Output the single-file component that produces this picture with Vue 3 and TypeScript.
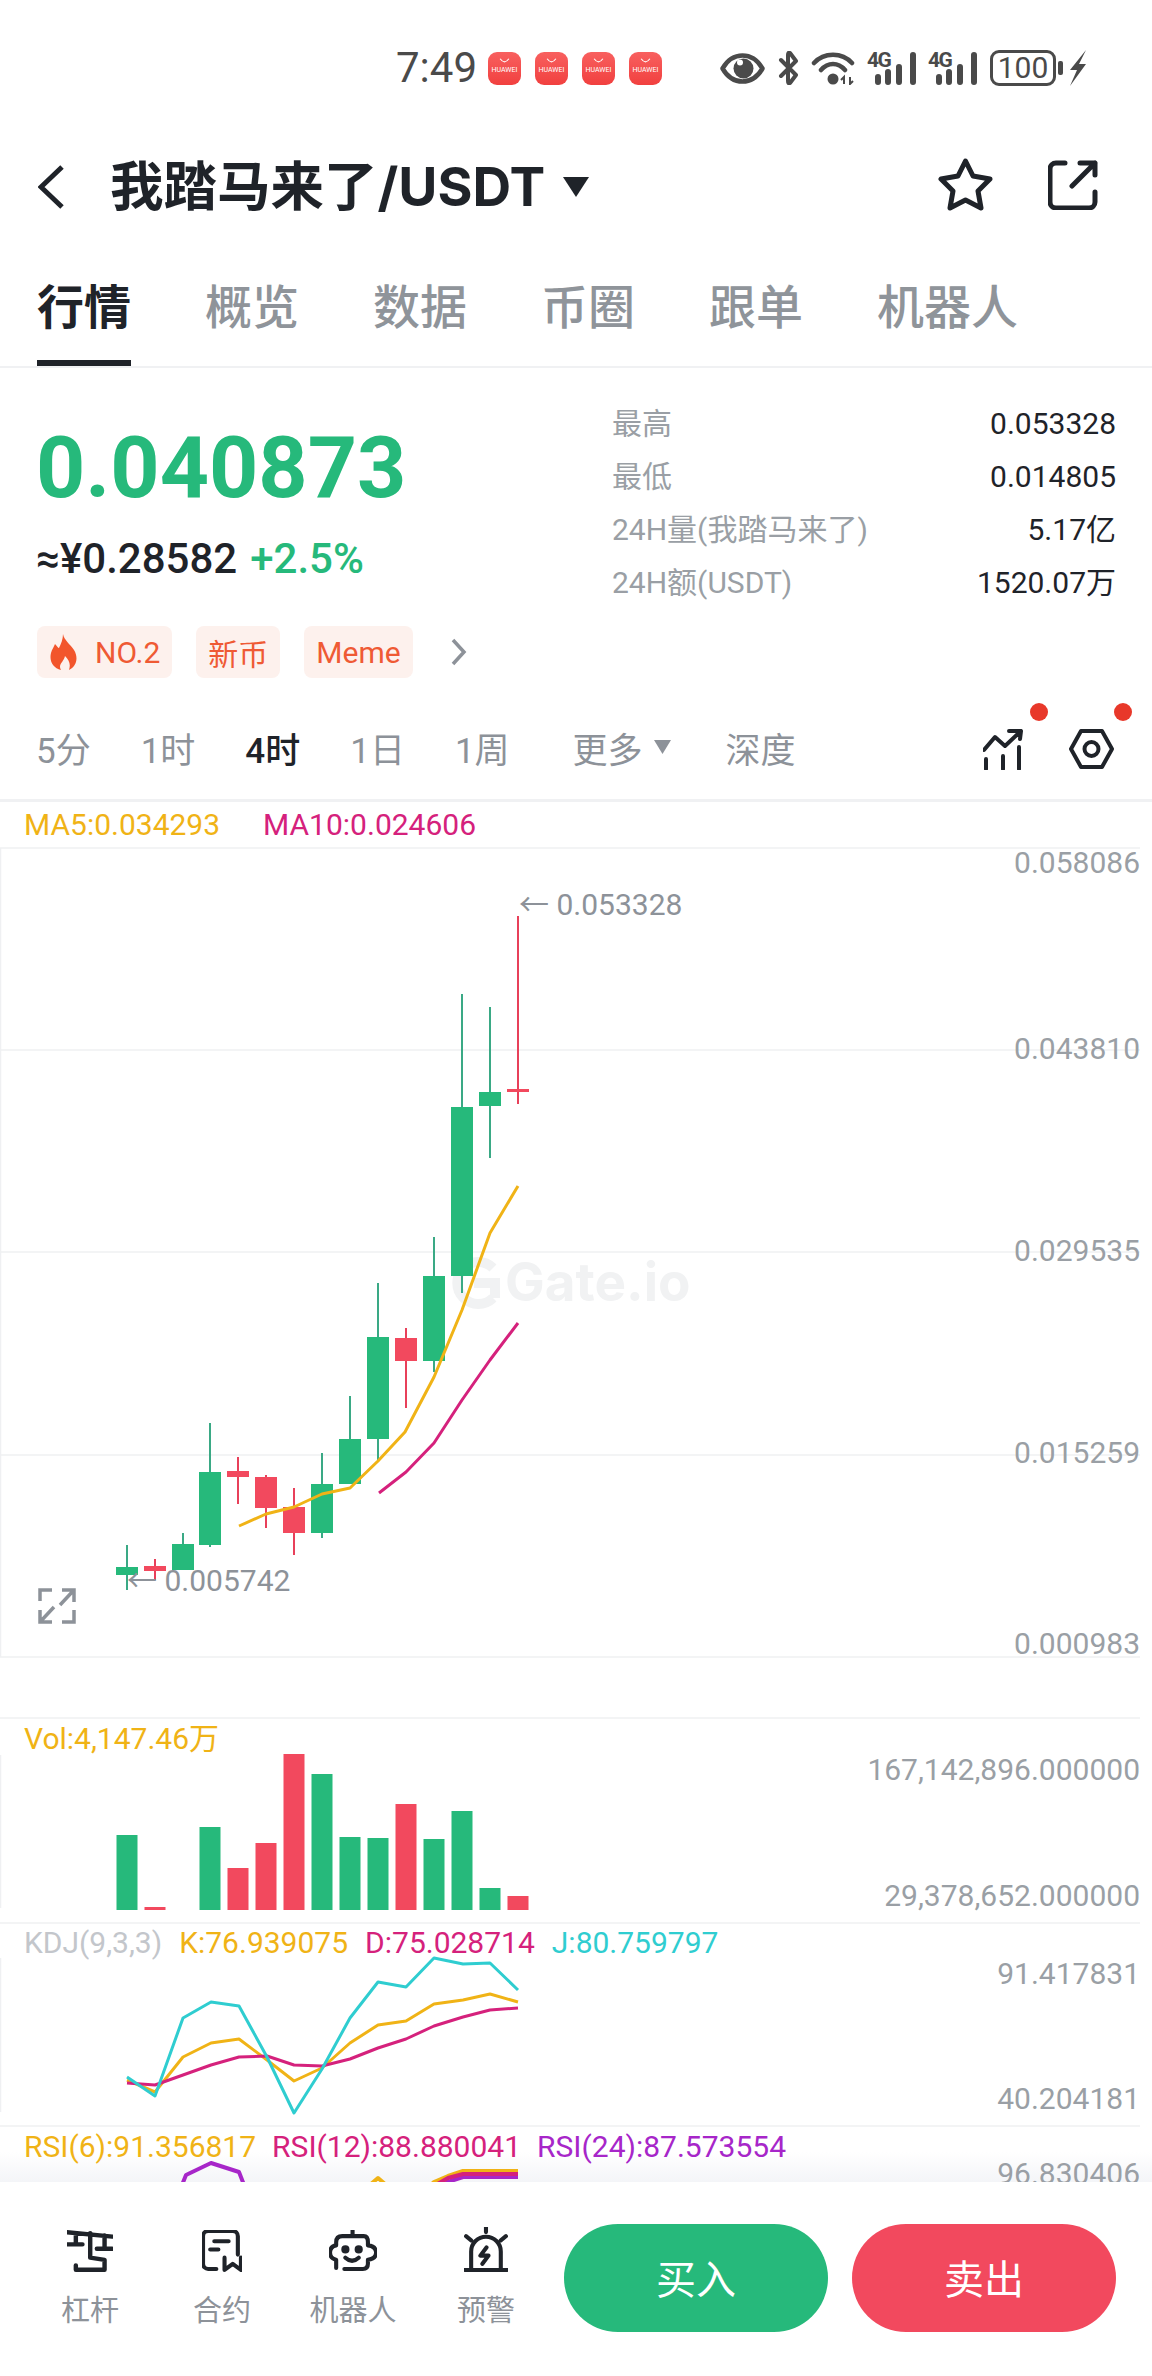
<script setup lang="ts">
interface Candle {
  x: number
  high: number
  low: number
  top: number
  bottom: number
  up: boolean
}

const tabs = ['行情', '概览', '数据', '币圈', '跟单', '机器人']
const intervals = ['5分', '1时', '4时', '1日', '1周']
const stats = [
  { label: '最高', value: '0.053328' },
  { label: '最低', value: '0.014805' },
  { label: '24H量(我踏马来了)', value: '5.17亿' },
  { label: '24H额(USDT)', value: '1520.07万' }
]

const candles: Candle[] = [
  { x: 127, high: 1545, low: 1590, top: 1567, bottom: 1575, up: true },
  { x: 155, high: 1559, low: 1580, top: 1566, bottom: 1571, up: false },
  { x: 183, high: 1533, low: 1570, top: 1544, bottom: 1570, up: true },
  { x: 210, high: 1423, low: 1547, top: 1472, bottom: 1545, up: true },
  { x: 238, high: 1457, low: 1504, top: 1471, bottom: 1477, up: false },
  { x: 266, high: 1475, low: 1528, top: 1477, bottom: 1508, up: false },
  { x: 294, high: 1488, low: 1555, top: 1507, bottom: 1533, up: false },
  { x: 322, high: 1453, low: 1538, top: 1484, bottom: 1533, up: true },
  { x: 350, high: 1396, low: 1484, top: 1439, bottom: 1484, up: true },
  { x: 378, high: 1283, low: 1461, top: 1337, bottom: 1439, up: true },
  { x: 406, high: 1328, low: 1408, top: 1338, bottom: 1361, up: false },
  { x: 434, high: 1237, low: 1372, top: 1276, bottom: 1361, up: true },
  { x: 462, high: 994, low: 1293, top: 1107, bottom: 1276, up: true },
  { x: 490, high: 1007, low: 1158, top: 1092, bottom: 1106, up: true },
  { x: 518, high: 916, low: 1104, top: 1089, bottom: 1092, up: false }
]

const ma5 = '239,1526 266,1514 294,1507 322,1494 350,1488 378,1461 405,1432 434,1377 462,1310 490,1233 518,1186'
const ma10 = '379,1493 406,1472 434,1443 462,1400 490,1360 518,1323'

const mainGrid = [848, 1050, 1252, 1455, 1657]
const mainAxis = [
  { y: 862, text: '0.058086' },
  { y: 1048, text: '0.043810' },
  { y: 1250, text: '0.029535' },
  { y: 1452, text: '0.015259' },
  { y: 1643, text: '0.000983' }
]

const volumes = [
  { x: 127, top: 1835, up: true },
  { x: 155, top: 1907, up: false },
  { x: 210, top: 1827, up: true },
  { x: 238, top: 1868, up: false },
  { x: 266, top: 1843, up: false },
  { x: 294, top: 1754, up: false },
  { x: 322, top: 1774, up: true },
  { x: 350, top: 1837, up: true },
  { x: 378, top: 1838, up: true },
  { x: 406, top: 1804, up: false },
  { x: 434, top: 1839, up: true },
  { x: 462, top: 1811, up: true },
  { x: 490, top: 1888, up: true },
  { x: 518, top: 1896, up: false }
]

const kLine = '127,2080 155,2092 183,2057 211,2043 239,2039 267,2060 294,2081 322,2068 350,2043 378,2025 406,2021 434,2004 463,2000 490,1994 518,2002'
const dLine = '127,2083 155,2085 183,2075 211,2065 239,2057 267,2056 294,2065 322,2066 350,2059 378,2048 406,2039 434,2026 463,2017 490,2010 518,2008'
const jLine = '127,2077 155,2096 183,2018 211,2002 239,2006 267,2057 294,2113 322,2069 350,2018 378,1982 406,1987 434,1958 463,1964 490,1963 518,1990'

const rsiYellow = '364,2190 378,2178 392,2190 420,2195 434,2182 448,2176 463,2171 518,2171'
const rsiPink = '420,2198 434,2186 448,2178 463,2174 518,2174'
const rsiPurple = '180,2190 186,2175 211,2163 239,2172 246,2190'
const rsiPurple2 = '420,2202 434,2190 448,2182 463,2177 518,2177'

const tools = [
  { key: 'leverage', label: '杠杆' },
  { key: 'contract', label: '合约' },
  { key: 'robot', label: '机器人' },
  { key: 'alert', label: '预警' }
]
</script>

<template>
  <div class="page">
    <div class="status">
      <span class="clock">7:49</span>
      <div class="apps">
        <span v-for="n in 4" :key="n" class="app">
          <svg class="app-arc" viewBox="0 0 10 5"><path d="M1 0.5 Q5 6 9 0.5" /></svg>
          <span class="app-name">HUAWEI</span>
        </span>
      </div>
      <svg class="st-eye" viewBox="0 0 45 31">
        <path d="M2.5 15.5 C8 6 15 2.5 22.5 2.5 C30 2.5 37 6 42.5 15.5 C37 25 30 28.5 22.5 28.5 C15 28.5 8 25 2.5 15.5Z" fill="none" stroke="#4a4a4a" stroke-width="4.5" stroke-linejoin="round" />
        <circle cx="23.5" cy="15.5" r="10" fill="#4a4a4a" />
        <circle cx="20" cy="9.5" r="3" fill="#fff" />
      </svg>
      <svg class="st-bt" viewBox="0 0 22 34">
        <path d="M3 9 L18 24 L12 32 Q10 33 10 30 V4 Q10 1 12 2 L18 10 L3 25" fill="none" stroke="#4a4a4a" stroke-width="4" stroke-linejoin="round" stroke-linecap="round" />
      </svg>
      <svg class="st-wifi" viewBox="0 0 46 34">
        <path d="M3 12 C13 1 31 1 41 12 M10 19 C17 11 27 11 34 19" fill="none" stroke="#4a4a4a" stroke-width="4.5" stroke-linecap="round" />
        <circle cx="22" cy="28" r="5.5" fill="#4a4a4a" />
        <path d="M33 33 V26 L30 29 M39 26 V33 L42 30" fill="none" stroke="#4a4a4a" stroke-width="2" />
      </svg>
      <div v-for="n in 2" :key="'sig' + n" class="signal">
        <span class="signal-net">4G</span>
        <svg class="signal-bars" viewBox="0 0 51 34">
          <path d="M11 26 V31 M21 21 V31 M32 16 V31 M46 4 V31" stroke="#4a4a4a" stroke-width="6" stroke-linecap="round" />
        </svg>
      </div>
      <span class="battery">100</span>
      <span class="battery-nub"></span>
      <svg class="st-bolt" viewBox="0 0 18 36"><path d="M17 0 L1 20 H8 L1 36 L17 14 H10Z" fill="#4a4a4a" /></svg>
    </div>

    <header class="nav">
      <svg class="back" viewBox="0 0 27 44"><polyline points="24,2 3,22 24,42" /></svg>
      <h1 class="pair">我踏马来了/USDT</h1>
      <svg class="pair-caret" viewBox="0 0 26 20"><polygon points="0,0 26,0 13,20" /></svg>
      <div class="nav-actions">
        <svg class="star" viewBox="0 0 55 53"><polygon points="27.5,3 35,18 52,21 40,33 43,50 27.5,42 12,50 15,33 3,21 20,18" /></svg>
        <svg class="share" viewBox="0 0 50 50">
          <path d="M17 3 H8 a6 6 0 0 0 -6 6 V42 a6 6 0 0 0 6 6 H41 a6 6 0 0 0 6 -6 V32 M24 26 L47 3 M32 3 H47 V15" />
        </svg>
      </div>
    </header>

    <nav class="tabs">
      <span v-for="(tab, i) in tabs" :key="tab" class="tab" :class="{ active: i === 0 }">{{ tab }}</span>
    </nav>

    <section class="summary">
      <div class="quote">
        <div class="price">0.040873</div>
        <div class="sub">≈¥0.28582<span class="change">+2.5%</span></div>
      </div>
      <div class="stats">
        <div v-for="s in stats" :key="s.label" class="stat">
          <span class="stat-label">{{ s.label }}</span>
          <span class="stat-value">{{ s.value }}</span>
        </div>
      </div>
    </section>

    <div class="tags">
      <span class="tag">
        <svg class="flame" viewBox="0 0 29 36">
          <path d="M14 0 C15 6 21 10 25 16 C30 24 27 33 20 36 C22 30 20 26 16 22 C15 27 11 29 11 33 C11 34 11.5 35 12 36 C4 34 0 27 2 19 C3 15 5 13 6 10 C8 12 9 14 10 14 C12 10 14 5 14 0Z" />
        </svg>
        NO.2
      </span>
      <span class="tag">新币</span>
      <span class="tag">Meme</span>
      <svg class="tag-more" viewBox="0 0 17 28"><polyline points="3,2 14,14 3,26" /></svg>
    </div>

    <div class="toolbar">
      <span v-for="(item, i) in intervals" :key="item" class="interval" :class="{ current: i === 2 }">{{ item }}</span>
      <span class="interval more">更多<svg class="more-caret" viewBox="0 0 17 14"><polygon points="0,0 17,0 8.5,14" /></svg></span>
      <span class="interval depth">深度</span>
      <div class="toolbar-icons">
        <span class="tool-icon">
          <svg class="trend" viewBox="0 0 40 41">
            <path d="M1 21 L12 8 L22 17 L38 2 M26 2 H38 L37 10 M3 30 V40 M20 27 V40 M36 18 V40" />
          </svg>
          <i class="dot dot-trend"></i>
        </span>
        <span class="tool-icon">
          <svg class="hex" viewBox="0 0 45 40">
            <polygon points="2,20 12,2 33,2 43,20 33,38 12,38" />
            <circle cx="22.5" cy="20" r="7" />
          </svg>
          <i class="dot dot-hex"></i>
        </span>
      </div>
    </div>

    <div class="legend-row">
      <span class="c-yellow">MA5:0.034293</span>
      <span class="c-pink">MA10:0.024606</span>
    </div>

    <div class="pane pane-main">
      <svg class="plot" viewBox="0 848 1152 869">
        <line x1="0.5" y1="848" x2="0.5" y2="1657" class="grid" />
        <line v-for="y in mainGrid" :key="y" x1="0" :y1="y" x2="1140" :y2="y" class="grid" />
        <path d="M493 1268 A21 21 0 1 0 493 1298 M474 1283 H495 V1298" fill="none" stroke="#f1f2f3" stroke-width="10" />
        <text x="505" y="1301" class="watermark">Gate.io</text>
        <template v-for="c in candles" :key="c.x">
          <line :x1="c.x" :y1="c.high" :x2="c.x" :y2="c.low" :class="c.up ? 'wick-up' : 'wick-down'" />
          <rect :x="c.x - 11" :y="c.top" width="22" :height="c.bottom - c.top" :class="c.up ? 'fill-up' : 'fill-down'" />
        </template>
        <polyline :points="ma5" class="line" stroke="#f0b316" />
        <polyline :points="ma10" class="line" stroke="#d5217c" />
        <text x="519" y="915" class="mark">← 0.053328</text>
        <text x="127" y="1591" class="mark">← 0.005742</text>
        <text v-for="a in mainAxis" :key="a.text" x="1140" :y="a.y + 11" class="axis">{{ a.text }}</text>
        <path d="M2 13 V2 H14 M22 17 L36 2 M24 2 H36 V14 M2 34 L16 19 M2 22 V34 H14 M36 22 V34 H24" transform="translate(38 1588)" class="expand" />
      </svg>
    </div>

    <div class="pane pane-vol">
      <svg class="plot" viewBox="0 1717 1152 205">
        <line x1="0" y1="1718" x2="1140" y2="1718" class="grid" />
        <line x1="0.5" y1="1755" x2="0.5" y2="1908" class="grid" />
        <rect v-for="v in volumes" :key="v.x" :x="v.x - 10.5" :y="v.top" width="21" :height="1910 - v.top" :class="v.up ? 'fill-up' : 'fill-down'" />
        <text x="1140" y="1780" class="axis">167,142,896.000000</text>
        <text x="1140" y="1906" class="axis">29,378,652.000000</text>
      </svg>
      <div class="legend legend-vol"><span class="c-yellow">Vol:4,147.46万</span></div>
    </div>

    <div class="pane pane-kdj">
      <svg class="plot" viewBox="0 1922 1152 203">
        <line x1="0" y1="1923" x2="1140" y2="1923" class="grid" />
        <line x1="0.5" y1="1958" x2="0.5" y2="2112" class="grid" />
        <polyline :points="kLine" class="line" stroke="#f0b316" />
        <polyline :points="dLine" class="line" stroke="#d5217c" />
        <polyline :points="jLine" class="line" stroke="#2fcdd0" />
        <text x="1140" y="1984" class="axis">91.417831</text>
        <text x="1140" y="2109" class="axis">40.204181</text>
      </svg>
      <div class="legend legend-kdj">
        <span class="c-grey">KDJ(9,3,3)</span>
        <span class="c-yellow">K:76.939075</span>
        <span class="c-pink">D:75.028714</span>
        <span class="c-cyan">J:80.759797</span>
      </div>
    </div>

    <div class="pane pane-rsi">
      <div class="pane-fade"></div>
      <svg class="plot" viewBox="0 2125 1152 57">
        <line x1="0" y1="2126" x2="1140" y2="2126" class="grid" />
        <polyline :points="rsiYellow" class="line line-thick" stroke="#f0b316" />
        <polyline :points="rsiPurple2" class="line line-thick" stroke="#a726c9" />
        <polyline :points="rsiPink" class="line line-thick" stroke="#d5217c" />
        <polyline :points="rsiPurple" class="line line-thick" stroke="#a726c9" />
        <text x="1140" y="2184" class="axis">96.830406</text>
      </svg>
      <div class="legend legend-rsi">
        <span class="c-yellow">RSI(6):91.356817</span>
        <span class="c-pink">RSI(12):88.880041</span>
        <span class="c-purple">RSI(24):87.573554</span>
      </div>
    </div>

    <footer class="bottom">
      <div v-for="t in tools" :key="t.key" class="bottom-tool" :class="'tool-' + t.key">
        <svg v-if="t.key === 'leverage'" class="leverage" viewBox="0 0 42 38">
          <path d="M0 2 L41 6 M8 3 V13 M1 13 H14 M34 5 V17 M27 17 H41 M21 3 V25 L34 27 V36 H8 V32" />
        </svg>
        <svg v-else-if="t.key === 'contract'" class="contract" viewBox="0 0 40 41">
          <path d="M14 38 H6 a5 5 0 0 1 -5 -5 V6 a5 5 0 0 1 5 -5 H30 a5 5 0 0 1 5 5 V24 M12 11 H26 M8 19 H16 M22 27 V39 L30 33 L38 39 V27" />
        </svg>
        <svg v-else-if="t.key === 'robot'" class="robot" viewBox="0 0 47 41">
          <path d="M23 0 V6 M13 6 H34 Q38 6 38 12 V15 Q46 16 46 22 Q46 28 38 29 V33 Q38 38 33 38 H15 M13 6 Q7 6 7 12 V15 Q1 16 1 22 Q1 28 7 29 V37 M16 27 Q22.5 33 29 27" />
          <circle cx="16" cy="19" r="2" />
          <circle cx="29" cy="19" r="2" />
        </svg>
        <svg v-else class="alert" viewBox="0 0 43 45">
          <path d="M21.5 0 V5 M2 9 L7 13 M41 9 L36 13 M7 42 V24 a14.5 14.5 0 0 1 29 0 V42 M1 42 H42 M22 20 L16 28 H24 L18 36" />
        </svg>
        <span class="bottom-label">{{ t.label }}</span>
      </div>
      <button class="trade buy">买入</button>
      <button class="trade sell">卖出</button>
    </footer>
  </div>
</template>

<style scoped>
.page {
  position: relative;
  width: 1152px;
  height: 2376px;
  overflow: hidden;
  background: #fff;
  color: #1f2329;
  font-family: Roboto, "Noto Sans CJK SC", sans-serif;
}

/* status bar */
.status {
  display: flex;
  align-items: center;
  height: 136px;
  padding-left: 396px;
  box-sizing: border-box;
  color: #4a4a4a;
}
.clock {
  width: 79px;
  font-size: 42px;
  line-height: 1;
}
.apps {
  display: flex;
  gap: 14px;
  margin-left: 13px;
}
.app {
  position: relative;
  display: block;
  width: 33px;
  height: 33px;
  border-radius: 9px;
  background: linear-gradient(#f8605f, #f1403f);
}
.app-arc {
  position: absolute;
  left: 11px;
  top: 6px;
  width: 11px;
  height: 6px;
  fill: none;
  stroke: #fff;
  stroke-width: 1;
}
.app-name {
  position: absolute;
  left: 0;
  right: 0;
  top: 14px;
  font-size: 7px;
  line-height: 9px;
  text-align: center;
  color: #fff;
}
.st-eye {
  width: 45px;
  height: 31px;
  margin-left: 58px;
}
.st-bt {
  width: 22px;
  height: 34px;
  margin-left: 13px;
}
.st-wifi {
  width: 46px;
  height: 34px;
  margin-left: 11px;
}
.signal {
  position: relative;
  width: 51px;
  height: 34px;
  margin-left: 10px;
}
.signal-net {
  position: absolute;
  left: 0;
  top: 1px;
  font-size: 21px;
  line-height: 17px;
  font-weight: 700;
  letter-spacing: -1.5px;
}
.signal-bars {
  position: absolute;
  inset: 0;
  width: 51px;
  height: 34px;
}
.battery {
  width: 66px;
  height: 36px;
  margin-left: 11px;
  box-sizing: border-box;
  border: 3px solid #4a4a4a;
  border-radius: 9px;
  font-size: 30px;
  line-height: 30px;
  text-align: center;
}
.battery-nub {
  width: 5px;
  height: 14px;
  margin-left: 2px;
  background: #4a4a4a;
  border-radius: 2px;
}
.st-bolt {
  width: 18px;
  height: 36px;
  margin-left: 6px;
}

/* title row */
.nav {
  display: flex;
  align-items: center;
  height: 102px;
  padding: 0 54px 0 38px;
}
.back {
  width: 27px;
  height: 44px;
  fill: none;
  stroke: #1f2329;
  stroke-width: 5;
}
.pair {
  margin: 0 0 0 45px;
  font-family: Inter, "Noto Sans CJK SC", sans-serif;
  font-size: 53.5px;
  line-height: 60px;
  font-weight: 700;
}
.pair-caret {
  width: 26px;
  height: 20px;
  margin: 0 0 0 18px;
  fill: #1f2329;
}
.nav-actions {
  display: flex;
  align-items: center;
  gap: 55px;
  margin-top: -5px;
  margin-left: auto;
}
.star {
  width: 55px;
  height: 53px;
  fill: none;
  stroke: #1f2329;
  stroke-width: 5;
  stroke-linejoin: round;
}
.share {
  width: 50px;
  height: 50px;
  fill: none;
  stroke: #1f2329;
  stroke-width: 5;
  stroke-linecap: round;
  stroke-linejoin: round;
}

/* tabs */
.tabs {
  display: flex;
  align-items: flex-end;
  gap: 74px;
  height: 130px;
  padding-left: 37px;
  box-sizing: border-box;
  border-bottom: 2px solid #f0f1f3;
}
.tab {
  position: relative;
  height: 116px;
  font-size: 47px;
  line-height: 116px;
  font-weight: 500;
  color: #8f949a;
}
.tab.active {
  color: #1f2329;
  font-weight: 700;
}
.tab.active::after {
  content: "";
  position: absolute;
  left: 0;
  right: 0;
  bottom: 0;
  height: 6px;
  background: #1f2329;
}

/* price summary */
.summary {
  display: flex;
  height: 241px;
  padding: 29px 36px 0 36px;
  box-sizing: border-box;
}
.quote {
  width: 576px;
  padding-top: 27px;
}
.price {
  font-size: 86px;
  line-height: 88px;
  font-weight: 700;
  color: #26b97b;
}
.sub {
  margin-top: 17px;
  font-size: 42px;
  line-height: 60px;
  font-weight: 500;
}
.change {
  margin-left: 13px;
  color: #26b97b;
}
.stats {
  flex: 1;
}
.stat {
  display: flex;
  justify-content: space-between;
  height: 53px;
  font-size: 30px;
  line-height: 53px;
}
.stat-label {
  color: #9a9fa5;
}

/* tags */
.tags {
  display: flex;
  align-items: center;
  gap: 24px;
  height: 52px;
  margin-top: 17px;
  padding-left: 37px;
}
.tag {
  display: flex;
  align-items: center;
  gap: 17px;
  height: 52px;
  padding: 0 12px;
  border-radius: 8px;
  background: #fdf1ed;
  font-size: 30px;
  color: #ef5a34;
}
.flame {
  width: 29px;
  height: 36px;
  fill: #f2552c;
}
.tag-more {
  width: 17px;
  height: 28px;
  margin-left: 13px;
  fill: none;
  stroke: #8d9299;
  stroke-width: 3.5;
}

/* interval toolbar */
.toolbar {
  display: flex;
  align-items: center;
  gap: 50px;
  height: 102px;
  margin-top: 22px;
  padding: 0 38px 5px 36px;
  box-sizing: border-box;
  border-bottom: 3px solid #f0f1f3;
}
.interval {
  display: flex;
  align-items: center;
  font-size: 35px;
  color: #8d9299;
}
.interval.current {
  color: #1f2329;
  font-weight: 500;
}
.more {
  margin-left: 13px;
}
.more-caret {
  width: 17px;
  height: 14px;
  margin-left: 11px;
  fill: #8d9299;
}
.depth {
  margin-left: 5px;
}
.toolbar-icons {
  display: flex;
  align-items: center;
  gap: 46px;
  margin-top: 5px;
  margin-left: auto;
}
.tool-icon {
  position: relative;
  display: block;
  height: 41px;
}
.trend {
  display: block;
  width: 40px;
  height: 41px;
  fill: none;
  stroke: #1f2329;
  stroke-width: 4;
  stroke-linecap: round;
  stroke-linejoin: round;
}
.hex {
  display: block;
  width: 45px;
  height: 40px;
  fill: none;
  stroke: #1f2329;
  stroke-width: 4;
  stroke-linejoin: round;
}
.dot {
  position: absolute;
  top: -26px;
  width: 18px;
  height: 18px;
  border-radius: 50%;
  background: #e8382a;
}
.dot-trend {
  left: 47px;
}
.dot-hex {
  left: 45px;
}

/* chart panes */
.legend-row {
  display: flex;
  gap: 43px;
  height: 46px;
  padding-left: 24px;
  box-sizing: border-box;
  font-size: 30px;
  line-height: 46px;
}
.pane {
  position: relative;
  width: 1152px;
  overflow: hidden;
}
.pane-main {
  height: 869px;
  overflow: visible;
}
.pane-main .plot {
  overflow: visible;
}
.pane-vol {
  height: 205px;
}
.pane-kdj {
  height: 203px;
}
.pane-rsi {
  height: 57px;
}
.plot {
  position: relative;
  display: block;
  width: 1152px;
  height: 100%;
}
.legend {
  position: absolute;
  top: 4px;
  left: 24px;
  display: flex;
  font-size: 30px;
  line-height: 36px;
}
.legend-kdj {
  top: 3px;
  gap: 17px;
}
.legend-rsi {
  gap: 16px;
}
.pane-fade {
  position: absolute;
  left: 0;
  right: 0;
  bottom: 0;
  height: 30px;
  background: linear-gradient(rgba(244, 245, 248, 0), rgb(244, 245, 248));
}
.c-yellow {
  color: #f0b316;
}
.c-pink {
  color: #d5217c;
}
.c-cyan {
  color: #2fcdd0;
}
.c-grey {
  color: #c3c6cb;
}
.c-purple {
  color: #a726c9;
}
.grid {
  stroke: #eff0f2;
  stroke-width: 1.5;
}
.wick-up {
  stroke: #3aa985;
  stroke-width: 2;
}
.wick-down {
  stroke: #e8405a;
  stroke-width: 2;
}
.fill-up {
  fill: #26b97b;
}
.fill-down {
  fill: #f2495e;
}
.line {
  fill: none;
  stroke-width: 3;
  stroke-linejoin: round;
}
.line-thick {
  stroke-width: 4;
}
.axis {
  font-size: 30px;
  fill: #9a9fa5;
  text-anchor: end;
}
.mark {
  font-size: 30px;
  fill: #8d9299;
}
.watermark {
  font-family: Inter, sans-serif;
  font-size: 53px;
  font-weight: 700;
  fill: #f1f2f3;
}
.expand {
  fill: none;
  stroke: #8d9299;
  stroke-width: 3.5;
}

/* bottom actions */
.bottom {
  position: relative;
  display: flex;
  align-items: flex-start;
  height: 194px;
  padding-left: 61px;
  box-sizing: border-box;
  background: #fff;
}
.bottom-tool {
  position: absolute;
  top: 48px;
  display: flex;
  flex-direction: column;
  align-items: center;
  width: 90px;
}
.tool-leverage {
  left: 45px;
}
.tool-contract {
  left: 177px;
}
.tool-robot {
  left: 308px;
}
.tool-alert {
  left: 441px;
}
.bottom-tool svg {
  height: 42px;
  fill: none;
  stroke: #1f2329;
  stroke-width: 4;
  stroke-linecap: round;
  stroke-linejoin: round;
}
.bottom-tool .alert {
  height: 46px;
  margin-top: -3px;
}
.bottom-tool .robot circle {
  fill: #1f2329;
}
.bottom-label {
  margin-top: 21px;
  font-size: 29px;
  line-height: 36px;
  color: #8d9299;
  white-space: nowrap;
}
.bottom-tool .alert + .bottom-label {
  margin-top: 20px;
}
.trade {
  width: 264px;
  height: 108px;
  margin-top: 42px;
  padding: 0 0 2px;
  border: 0;
  border-radius: 54px;
  font-family: inherit;
  font-size: 40px;
  color: #fff;
}
.buy {
  margin-left: 503px;
  background: #26b97b;
}
.sell {
  margin-left: 24px;
  background: #f2495e;
}
</style>

<style>
html,
body {
  margin: 0;
  background: #fff;
}
</style>
